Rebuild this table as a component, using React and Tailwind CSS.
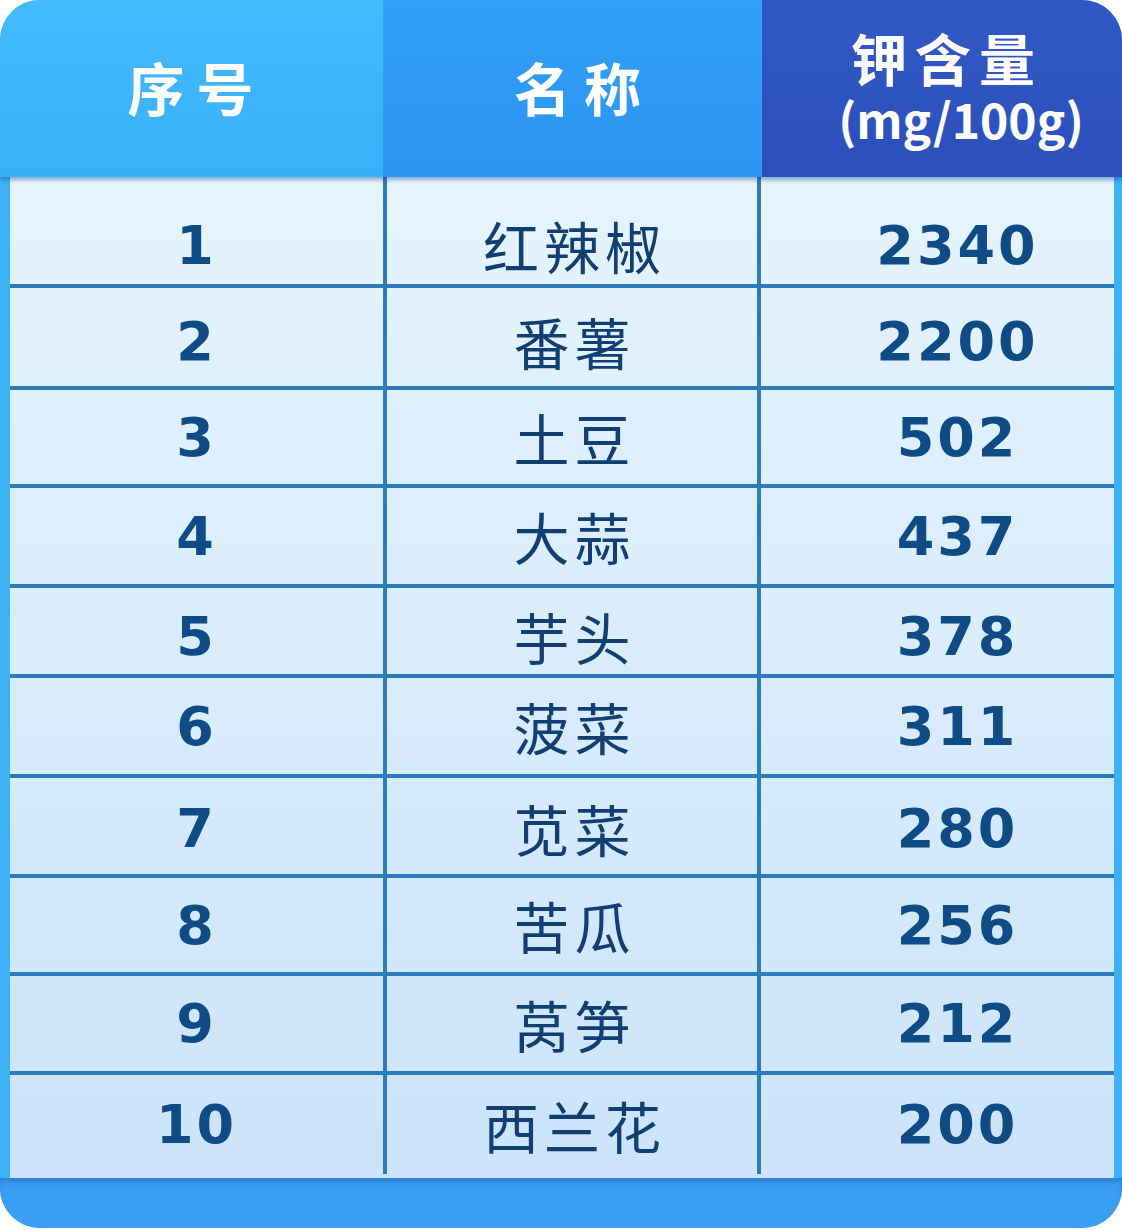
import React from "react";

const rows = [
  { n: "1", name: "红辣椒", k: "2340", h: "h-[111px]", pt: "pt-[26px]" },
  { n: "2", name: "番薯", k: "2200", h: "h-[102px]", pt: "pt-[8px]" },
  { n: "3", name: "土豆", k: "502", h: "h-[98px]", pt: "" },
  { n: "4", name: "大蒜", k: "437", h: "h-[100px]", pt: "" },
  { n: "5", name: "芋头", k: "378", h: "h-[90px]", pt: "pt-[6px]" },
  { n: "6", name: "菠菜", k: "311", h: "h-[100px]", pt: "" },
  { n: "7", name: "苋菜", k: "280", h: "h-[100px]", pt: "pt-[4px]" },
  { n: "8", name: "苦瓜", k: "256", h: "h-[98px]", pt: "" },
  { n: "9", name: "莴笋", k: "212", h: "h-[99px]", pt: "" },
  { n: "10", name: "西兰花", k: "200", h: "h-[99px]", pt: "" },
];

const cjk = "font-['Noto_Sans_CJK_SC',sans-serif]";
const num = "font-['DejaVu_Sans','Noto_Sans_CJK_SC',sans-serif]";

export default function App() {
  return (
    <div className="w-[1122px] h-[1230px] bg-white">
      <div className="w-[1122px] h-[1228px] rounded-[40px] overflow-hidden flex flex-col bg-[#3cb1f5]">
        {/* header */}
        <div className="h-[177px] grid grid-cols-[383px_379px_1fr] relative z-10 shadow-[0_3px_4px_rgba(20,80,150,0.45)]">
          <div className={`bg-gradient-to-b from-[#43bafc] to-[#39b0f8] flex items-center justify-center text-white font-bold text-[57px] tracking-[12px] pl-[10px] pb-[4px] ${cjk}`}>
            序号
          </div>
          <div className={`bg-gradient-to-b from-[#31a0f8] to-[#2c95f2] flex items-center justify-center text-white font-bold text-[57px] pl-[10px] pb-[4px] ${cjk}`}>
            名 称
          </div>
          <div className={`bg-gradient-to-b from-[#3159c6] to-[#2c50bb] flex flex-col items-center justify-center text-white font-bold pl-[8px] pb-[4px] ${cjk}`}>
            <div className="text-[56px] leading-[62px] tracking-[8px] pl-[2px]">钾含量</div>
            <div className="text-[48px] leading-[60px] pl-[30px]">(mg/100g)</div>
          </div>
        </div>

        {/* body */}
        <div className="flex-1 pl-[10px] pr-[8px] bg-[#3cb1f5]">
          <div className="h-full flex flex-col bg-gradient-to-b from-[#e5f4fe] to-[#cbe4fa]">
            {rows.map((r, i) => (
              <div
                key={r.n}
                className={`${r.h} grid grid-cols-[377px_374px_1fr] ${i < rows.length - 1 ? "border-b-4 border-[#2c7cbc]" : ""}`}
              >
                <div className={`border-r-4 border-[#2c7cbc] flex items-center justify-center ${r.pt}`}>
                  <span className={`text-[54px] font-bold text-[#0f4b84] tracking-[3px] ${num}`}>{r.n}</span>
                </div>
                <div className={`border-r-4 border-[#2c7cbc] flex items-center justify-center ${r.pt}`}>
                  <span className={`text-[56px] font-normal text-[#123f72] tracking-[5px] pl-[5px] ${cjk}`}>{r.name}</span>
                </div>
                <div className={`flex items-center justify-center pl-[40px] ${r.pt}`}>
                  <span className={`text-[54px] font-bold text-[#0f4b84] tracking-[3px] ${num}`}>{r.k}</span>
                </div>
              </div>
            ))}
          </div>
        </div>

        {/* bottom bar */}
        <div className="h-[50px] bg-gradient-to-b from-[#3a9cf3] to-[#3b9ff6] shadow-[inset_0_4px_4px_rgba(20,90,170,0.35)]" />
      </div>
    </div>
  );
}
